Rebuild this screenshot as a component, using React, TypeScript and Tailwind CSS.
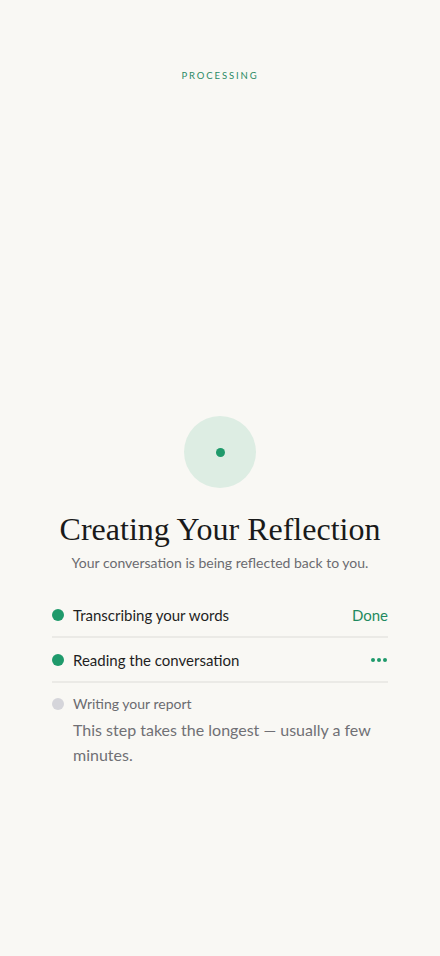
import React from 'react';

const sans = { fontFamily: 'Lato, "Noto Sans", sans-serif' };

type Step = { label: string; state: 'done' | 'active' | 'pending'; note?: string };

const steps: Step[] = [
  { label: 'Transcribing your words', state: 'done' },
  { label: 'Reading the conversation', state: 'active' },
  { label: 'Writing your report', state: 'pending', note: 'This step takes the longest — usually a few minutes.' },
];

const StepRow: React.FC<{ step: Step; last: boolean }> = ({ step, last }) => {
  if (step.state === 'pending') {
    return (
      <div className="flex gap-[9px] pt-[11px]">
        <span className="mt-[4px] h-[12px] w-[12px] shrink-0 rounded-full bg-[#d5d5da]" />
        <div>
          <p className="text-[14px] leading-[20px] text-[#6b6b70]">{step.label}</p>
          <p className="mt-[3px] text-[16px] leading-[25px] text-[#707075]">{step.note}</p>
        </div>
      </div>
    );
  }
  return (
    <div className={`flex h-[45px] items-center gap-[9px] ${last ? '' : 'border-b-2 border-[#ebeae6]'}`}>
      <span className="h-[12px] w-[12px] shrink-0 rounded-full bg-[#1f9a6b]" />
      <span className="flex-1 text-[15px] text-[#1f1f1f]">{step.label}</span>
      {step.state === 'done' ? (
        <span className="text-[15px] text-[#1f8a60]">Done</span>
      ) : (
        <span className="flex gap-[2px] pr-[1px]">
          <span className="h-[4px] w-[4px] rounded-full bg-[#1f9a6b]" />
          <span className="h-[4px] w-[4px] rounded-full bg-[#1f9a6b]" />
          <span className="h-[4px] w-[4px] rounded-full bg-[#1f9a6b]" />
        </span>
      )}
    </div>
  );
};

export default function App() {
  return (
    <div className="min-h-screen bg-[#f9f8f4]" style={sans}>
      <p className="pt-[69px] text-center text-[9.5px] tracking-[0.2em] text-[#2a8a64]">PROCESSING</p>
      <div className="mt-[333px] flex flex-col items-center">
        <div className="flex h-[72px] w-[72px] items-center justify-center rounded-full bg-[#ddede3]">
          <span className="h-[9px] w-[9px] rounded-full bg-[#1f9a6b]" />
        </div>
        <h1
          className="mt-[21px] text-[32px] leading-[40px] text-[#1a1a1a]"
          style={{ fontFamily: '"Liberation Serif", serif' }}
        >
          Creating Your Reflection
        </h1>
        <p className="mt-[3px] text-[14px] text-[#6b6b70]">Your conversation is being reflected back to you.</p>
      </div>
      <div className="mx-[52px] mt-[20px]">
        {steps.map((s, i) => (
          <StepRow key={s.label} step={s} last={i === steps.length - 1} />
        ))}
      </div>
    </div>
  );
}
